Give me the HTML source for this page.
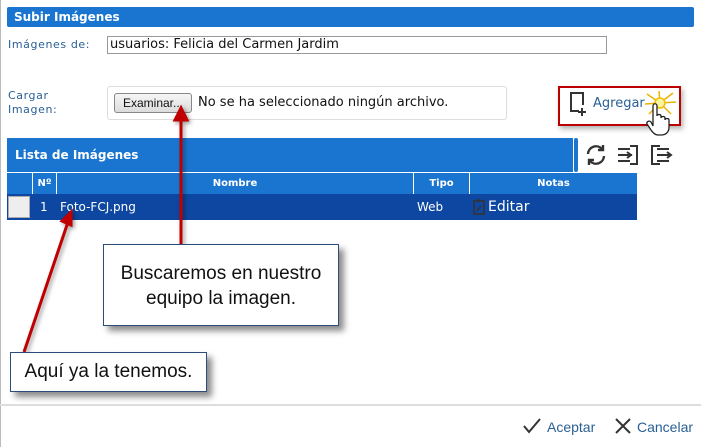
<!DOCTYPE html>
<html><head><meta charset="utf-8"><style>
*{margin:0;padding:0;box-sizing:border-box}
body{width:701px;height:447px;background:#fff;position:relative;overflow:hidden;font-family:"DejaVu Sans","Liberation Sans",sans-serif}
.a{position:absolute}
.lbl{font-family:"DejaVu Sans",sans-serif;font-size:11px;color:#2a5f96;letter-spacing:0.6px}
.th{font-family:"DejaVu Sans",sans-serif;font-weight:bold;font-size:10px;color:#fff;text-align:center;line-height:21px;border-right:1px solid #fff}
.callout{background:#fff;border:1px solid #2a4d7a;box-shadow:5px 5px 6px rgba(0,0,0,.45);font-family:"Liberation Sans Narrow","Liberation Sans",sans-serif;font-size:19px;color:#111;text-align:center}
</style></head><body>
<div class="a" style="left:0;top:0;width:1px;height:447px;background:#bbb"></div>
<div class="a" style="left:7px;top:7px;width:687px;height:20px;background:#1a75d0;border-radius:2px;color:#fff;font:bold 12px 'DejaVu Sans',sans-serif;line-height:20px;padding-left:7px">Subir Imágenes</div>
<div class="a lbl" style="left:8px;top:38px">Imágenes de:</div>
<div class="a" style="left:107px;top:36px;width:500px;height:18px;border:1px solid #999;font-size:13px;line-height:16px;padding-left:2px;color:#111">usuarios: Felicia del Carmen Jardim</div>
<div class="a lbl" style="left:8px;top:89px;line-height:14px">Cargar<br>Imagen:</div>
<div class="a" style="left:107px;top:86px;width:400px;height:34px;border:1px solid #ddd;border-radius:3px"></div>
<div class="a" style="left:114px;top:93px;width:78px;height:20px;border:1px solid #888;border-radius:3px;background:linear-gradient(#f6f6f6,#dcdcdc);font-family:'Liberation Sans',sans-serif;font-size:12px;line-height:18px;text-align:center;color:#111">Examinar...</div>
<div class="a" style="left:198px;top:95px;font-size:13px;color:#111">No se ha seleccionado ningún archivo.</div>
<div class="a" style="left:558px;top:86px;width:123px;height:40px;border:2px solid #b00;box-shadow:2px 3px 5px rgba(0,0,0,.3)"></div>
<svg class="a" style="left:567px;top:91px" width="24" height="26" viewBox="0 0 24 26"><path d="M12 20H4V2h12v12" fill="none" stroke="#333" stroke-width="2"/><path d="M15 17v8M11 21h8" stroke="#333" stroke-width="2"/></svg>
<div class="a" style="left:593px;top:96px;font-size:13px;color:#2a5f96">Agregar</div>
<svg class="a" style="left:643px;top:90px" width="34" height="26" viewBox="0 0 34 26" stroke="#e8b400" stroke-width="1.5"><path d="M17 13L4 4M17 13L30 3M17 13L2 14M17 13L33 12M17 13L6 24M17 13L28 24M17 13L16 1"/><circle cx="17" cy="13" r="5" fill="#fff3a0" stroke="#f0c000"/></svg>
<svg class="a" style="left:645px;top:100px" width="28" height="36" viewBox="0 0 28 36"><path d="M8 26V6c0-3 4-3 4 0v10c0-2 4-2 4 0v2c0-2 4-2 4 0v2c0-2 4-2 4 0v7c0 5-3 8-8 8h-3c-3 0-5-2-7-5l-4-6c-1-2 2-4 4-2z" fill="#fff" stroke="#222" stroke-width="1.3"/></svg>
<div class="a" style="left:7px;top:138px;width:566px;height:34px;background:#1a75d0;color:#fff;font:bold 12px 'DejaVu Sans',sans-serif;line-height:34px;padding-left:8px">Lista de Imágenes</div>
<div class="a" style="left:574px;top:138px;width:4px;height:34px;background:#1a75d0;border-radius:2px"></div>
<svg class="a" style="left:585px;top:144px" width="22" height="22" viewBox="0 0 22 22" fill="none" stroke="#333" stroke-width="2.4"><path d="M3 10a8 8 0 0 1 14-5M19 12a8 8 0 0 1-14 5"/><path d="M18 1v5h-5M4 21v-5h5"/></svg>
<svg class="a" style="left:616px;top:144px" width="24" height="22" viewBox="0 0 24 22" fill="none" stroke="#333" stroke-width="2"><path d="M14 2h7v18h-7"/><path d="M2 5h12M2 11h14M2 17h12M11 8l4 3-4 3"/></svg>
<svg class="a" style="left:649px;top:144px" width="24" height="22" viewBox="0 0 24 22" fill="none" stroke="#333" stroke-width="2"><path d="M11 2H3v18h8"/><path d="M8 5h12M8 11h14M8 17h12M18 8l4 3-4 3"/></svg>
<div class="a" style="left:7px;top:172px;width:630px;height:22px;background:#1a75d0;border-top:1px solid #fff"></div>
<div class="a th" style="left:7px;top:173px;width:26px;height:21px"></div>
<div class="a th" style="left:33px;top:173px;width:24px;height:21px">Nº</div>
<div class="a th" style="left:57px;top:173px;width:357px;height:21px">Nombre</div>
<div class="a th" style="left:414px;top:173px;width:56px;height:21px">Tipo</div>
<div class="a th" style="left:470px;top:173px;width:167px;height:21px;border:none">Notas</div>
<div class="a" style="left:7px;top:194px;width:630px;height:26px;background:#0d47a1"></div>
<div class="a" style="left:8px;top:196px;width:22px;height:22px;background:#eee;border:1px solid #aaa"></div>
<div class="a" style="left:40px;top:200px;color:#fff;font-size:12px">1</div>
<div class="a" style="left:60px;top:200px;color:#fff;font-size:12px">Foto-FCJ.png</div>
<div class="a" style="left:417px;top:200px;color:#fff;font-size:12px">Web</div>
<svg class="a" style="left:473px;top:199px" width="12" height="16" viewBox="0 0 12 16" fill="none" stroke="#333" stroke-width="1.6"><rect x="1" y="2" width="10" height="13"/><path d="M4 1h4M4 12l4-5"/></svg>
<div class="a" style="left:488px;top:199px;color:#fff;font-size:14px">Editar</div>
<svg class="a" style="left:0;top:0" width="701" height="447"><g stroke="#c00000" stroke-width="3" fill="#c00000" style="filter:drop-shadow(2px 2px 2px rgba(0,0,0,.4))"><line x1="181" y1="118" x2="181" y2="244"/><path d="M181 108l-6 12h12z"/><line x1="68" y1="222" x2="24" y2="352"/><path d="M71 212l-9 9 9 4z"/></g></svg>
<div class="a callout" style="left:103px;top:244px;width:236px;height:82px;padding-top:16px;line-height:25px">Buscaremos en nuestro<br>equipo la imagen.</div>
<div class="a callout" style="left:10px;top:352px;width:197px;height:40px;line-height:38px">Aquí ya la tenemos.</div>
<div class="a" style="left:0;top:404px;width:701px;height:2px;background:#ddd"></div>
<svg class="a" style="left:523px;top:418px" width="18" height="16" viewBox="0 0 18 16" fill="none" stroke="#333" stroke-width="2"><path d="M1 8l5 6L17 1"/></svg>
<div class="a" style="left:547px;top:419px;font-family:'Liberation Sans',sans-serif;font-size:14px;color:#2a5f96">Aceptar</div>
<svg class="a" style="left:614px;top:417px" width="18" height="18" viewBox="0 0 18 18" stroke="#333" stroke-width="2"><path d="M2 2l14 14M16 2L2 16"/></svg>
<div class="a" style="left:637px;top:419px;font-family:'Liberation Sans',sans-serif;font-size:14px;color:#2a5f96">Cancelar</div>
</body></html>
